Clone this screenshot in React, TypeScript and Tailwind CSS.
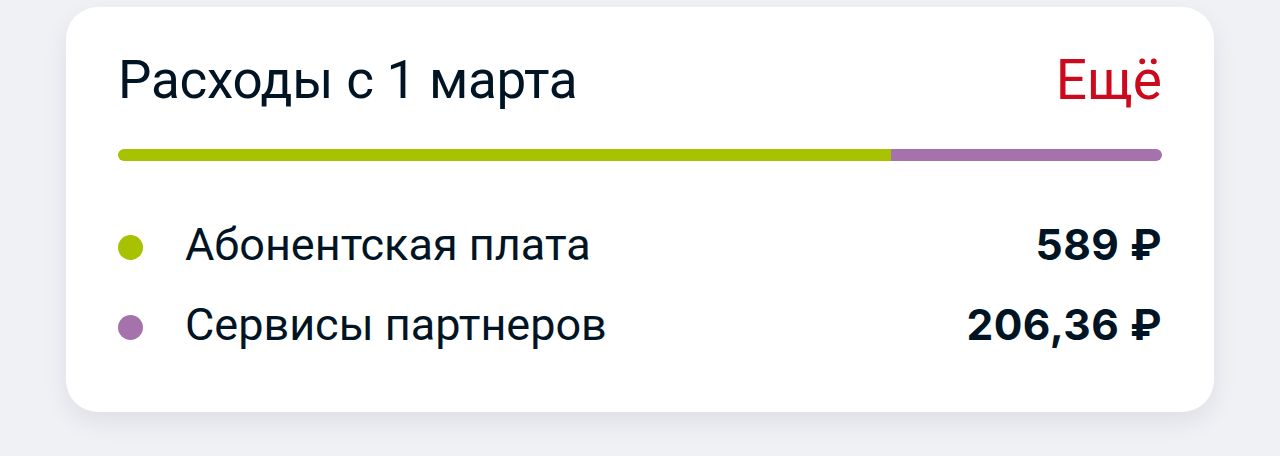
import React from "react";

const rows = [
  { label: "Абонентская плата", amount: "589 ₽", color: "bg-[#a8c100]" },
  { label: "Сервисы партнеров", amount: "206,36 ₽", color: "bg-[#a672ab]" },
];

export default function App() {
  return (
    <div
      className="w-full h-[456px] bg-[#eff1f5] px-[66px] pt-[7px]"
      style={{ fontFamily: "Roboto, 'Noto Sans', sans-serif" }}
    >
      <div className="bg-white rounded-[32px] shadow-[0_10px_24px_rgba(20,30,60,0.08)] px-[52px] pt-[46px] pb-[47px]">
        <div className="flex items-center justify-between h-[55px]">
          <span className="text-[53px] leading-[55px] text-[#001424] tracking-[-0.25px]">
            Расходы с 1 марта
          </span>
          <span className="text-[55px] leading-[55px] text-[#cc0a1e]">Ещё</span>
        </div>
        <div className="mt-[41px] flex h-[12px] rounded-full overflow-hidden">
          <div className="bg-[#a8c100]" style={{ width: "74.05%" }} />
          <div className="bg-[#a672ab] flex-1" />
        </div>
        <div className="mt-[44px] flex flex-col">
          {rows.map((r) => (
            <div key={r.label} className="flex items-center h-[80px]">
              <span className={`w-[25px] h-[25px] rounded-full ${r.color} mt-[4px]`} />
              <span className="ml-[42px] text-[45px] leading-[50px] text-[#001424] flex-1">{r.label}</span>
              <span
                className="text-[42.5px] leading-[50px] font-bold text-[#001424] tracking-[0.5px]"
                style={{ fontFamily: "Inter, sans-serif" }}
              >
                {r.amount}
              </span>
            </div>
          ))}
        </div>
      </div>
    </div>
  );
}
